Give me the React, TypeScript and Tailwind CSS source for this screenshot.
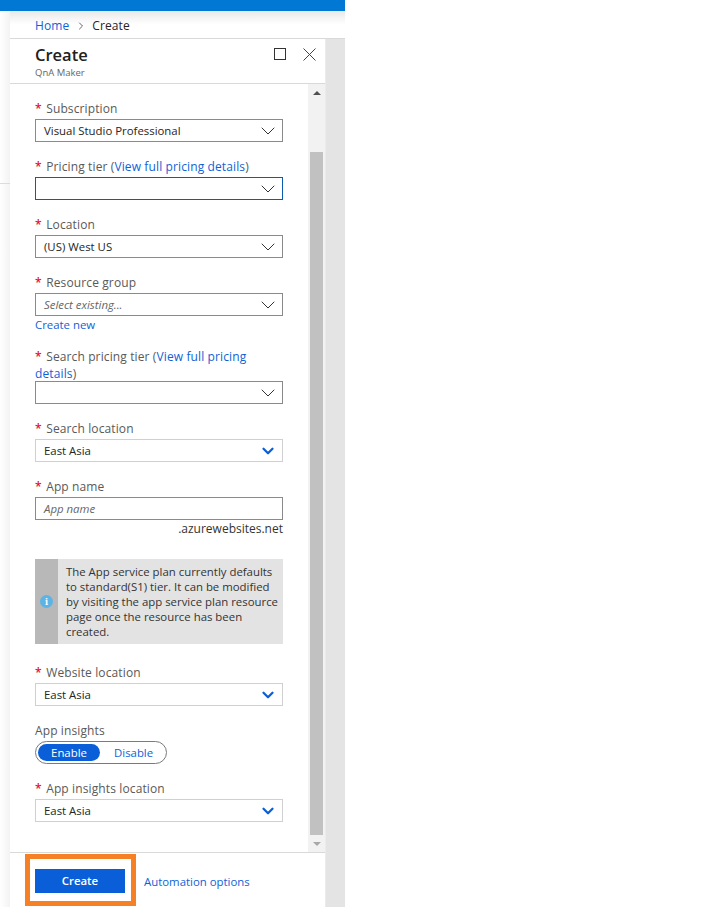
import { ChevronDown, ChevronRight } from "lucide-react";

const font = { fontFamily: '"Open Sans", "Noto Sans", sans-serif' };

function Star() {
  return <span className="mr-[4.5px] font-semibold text-[#e81123]">*</span>;
}

function Label({ children, required = true }: { children: React.ReactNode; required?: boolean }) {
  return (
    <div className="text-[12px] leading-[21px] tracking-[0.12px] text-[#595959]">
      {required && <Star />}
      {children}
    </div>
  );
}

function Select({
  value,
  placeholder,
  focused,
  light,
}: {
  value?: string;
  placeholder?: string;
  focused?: boolean;
  light?: boolean;
}) {
  const border = focused ? "border-[#0b5cad]" : light ? "border-[#d0d0d0]" : "border-[#8a8a8a]";
  return (
    <div className={`flex h-[23px] items-center justify-between border bg-white pl-[8px] ${border}`}>
      {placeholder ? (
        <span className="text-[11.4px] italic text-[#666666]">{placeholder}</span>
      ) : (
        <span className="text-[11.4px] text-[#252525]">{value}</span>
      )}
      {light ? (
        <ChevronDown size={18} strokeWidth={3} className="mr-[5px] shrink-0 text-[#0a5fd8]" />
      ) : (
        <ChevronDown size={24} strokeWidth={1} className="mr-[2px] shrink-0 text-[#333333]" />
      )}
    </div>
  );
}

function Link({ children }: { children: React.ReactNode }) {
  return <span className="text-[#0f62d6]">{children}</span>;
}

export default function App() {
  return (
    <div className="flex h-[907px] w-[716px] overflow-hidden bg-white" style={font}>
      <div className="flex w-[345px] flex-col">
        <div className="h-[11px] shrink-0 bg-[#0078d4]" />
        <div className="flex min-h-0 flex-1">
          <div className="flex w-[10px] flex-col bg-gradient-to-r from-white to-[#f3f3f3]">
            <div className="mt-[172px] h-px bg-[#dcdcdc]" />
          </div>
          <div className="flex min-w-0 flex-1 flex-col">
            <div className="flex h-[27px] items-center bg-gradient-to-b from-[#e9e9e9] via-white to-white pl-[25px] pt-[2px] text-[12px] tracking-[0.1px] text-[#252525]">
              <Link>Home</Link>
              <ChevronRight size={12} className="ml-[6px] mr-[5px] text-[#666666]" />
              <span>Create</span>
            </div>
            <div className="h-px bg-[#d9d9d9]" />
            <div className="flex min-h-0 flex-1">
              <div className="flex w-[315px] flex-col bg-white">
                <div className="flex h-[45px] shrink-0 justify-between border-b border-[#d9d9d9] pl-[25px] pr-[9px]">
                  <div>
                    <div className="mt-[5px] text-[16.5px] font-semibold leading-[22px] text-[#202020]">Create</div>
                    <div className="text-[9.5px] leading-[13px] text-[#666666]">QnA Maker</div>
                  </div>
                  <div className="mt-[9px] flex gap-[17px]">
                    <div className="h-[12px] w-[12px] border border-[#333333]" />
                    <svg width="13" height="13" viewBox="0 0 13 13" className="text-[#444444]">
                      <path d="M.5.5l12 12M12.5.5l-12 12" stroke="currentColor" fill="none" />
                    </svg>
                  </div>
                </div>
                <div className="flex min-h-0 flex-1">
                  <div className="w-[298px] pl-[25px] pr-[25px] pt-[14px]">
                    <Label>Subscription</Label>
                    <Select value="Visual Studio Professional" />
                    <div className="mt-[14px]">
                      <Label>
                        Pricing tier (<Link>View full pricing details</Link>)
                      </Label>
                      <Select focused />
                    </div>
                    <div className="mt-[14px]">
                      <Label>Location</Label>
                      <Select value="(US) West US" />
                    </div>
                    <div className="mt-[14px]">
                      <Label>Resource group</Label>
                      <Select placeholder="Select existing..." />
                      <div className="mt-px text-[11.4px] leading-[16px] text-[#0f62d6]">Create new</div>
                    </div>
                    <div className="mt-[15px] h-[33px] text-[12px] leading-[17px] tracking-[0.12px] text-[#595959]">
                      <Star />
                      Search pricing tier (<Link>View full pricing details</Link>)
                    </div>
                    <Select />
                    <div className="mt-[14px]">
                      <Label>Search location</Label>
                      <Select value="East Asia" light />
                    </div>
                    <div className="mt-[14px]">
                      <Label>App name</Label>
                      <div className="flex h-[23px] items-center border border-[#8a8a8a] pl-[8px] text-[11.4px] italic text-[#666666]">
                        App name
                      </div>
                      <div className="mt-px text-right text-[12px] leading-[16px] text-[#333333]">.azurewebsites.net</div>
                    </div>
                    <div className="mt-[22px] flex h-[85px] bg-[#e3e3e3]">
                      <div className="flex w-[23px] shrink-0 items-center justify-center bg-[#b8b8b8]">
                        <div className="flex h-[13px] w-[13px] items-center justify-center rounded-full bg-[#5bb4e5] font-serif text-[10px] font-bold leading-none text-white">
                          i
                        </div>
                      </div>
                      <div className="pl-[8px] pr-[3px] pt-[5px] text-[11.4px] leading-[15px] text-[#333333]">
                        The App service plan currently defaults to standard(S1) tier. It can be modified by visiting the app service plan resource page once the resource has been created.
                      </div>
                    </div>
                    <div className="mt-[18px]">
                      <Label>Website location</Label>
                      <Select value="East Asia" light />
                    </div>
                    <div className="mt-[14px]">
                      <Label required={false}>App insights</Label>
                      <div className="flex h-[23px] w-[132px] items-center rounded-full border border-[#7a7a7a] px-[2px] text-[11.4px]">
                        <div className="flex h-[17px] w-[62px] items-center justify-center rounded-full bg-[#0a5fd8] font-medium text-white">
                          Enable
                        </div>
                        <div className="ml-[14px] text-[#0f62d6]">Disable</div>
                      </div>
                    </div>
                    <div className="mt-[14px]">
                      <Label>App insights location</Label>
                      <Select value="East Asia" light />
                    </div>
                  </div>
                  <div className="flex w-[17px] shrink-0 flex-col items-center bg-[#f2f2f2]">
                    <div className="flex h-[17px] items-center justify-center">
                      <div className="h-0 w-0 border-x-[4px] border-b-[4px] border-x-transparent border-b-[#505050]" />
                    </div>
                    <div className="mt-[51px] h-[683px] w-[13px] bg-[#c1c1c1]" />
                    <div className="flex h-[17px] items-center justify-center">
                      <div className="h-0 w-0 border-x-[4px] border-t-[4px] border-x-transparent border-t-[#a8a8a8]" />
                    </div>
                  </div>
                </div>
                <div className="flex h-[55px] shrink-0 items-start border-t border-[#d9d9d9] pl-[15px]">
                  <div className="mt-px border-[5px] border-[#f58025] pb-[8px] pl-[5px] pr-[6px] pt-[10px]">
                    <div className="flex h-[24px] w-[90px] items-center justify-center bg-[#0a5fd8] text-[11.4px] font-semibold text-white">
                      Create
                    </div>
                  </div>
                  <div className="ml-[8px] mt-[21px] text-[11.4px] leading-[16px] text-[#0f62d6]">Automation options</div>
                </div>
              </div>
              <div className="flex-1 border-l border-[#ebebeb] bg-[#e4e4e4]" />
            </div>
          </div>
        </div>
      </div>
    </div>
  );
}
